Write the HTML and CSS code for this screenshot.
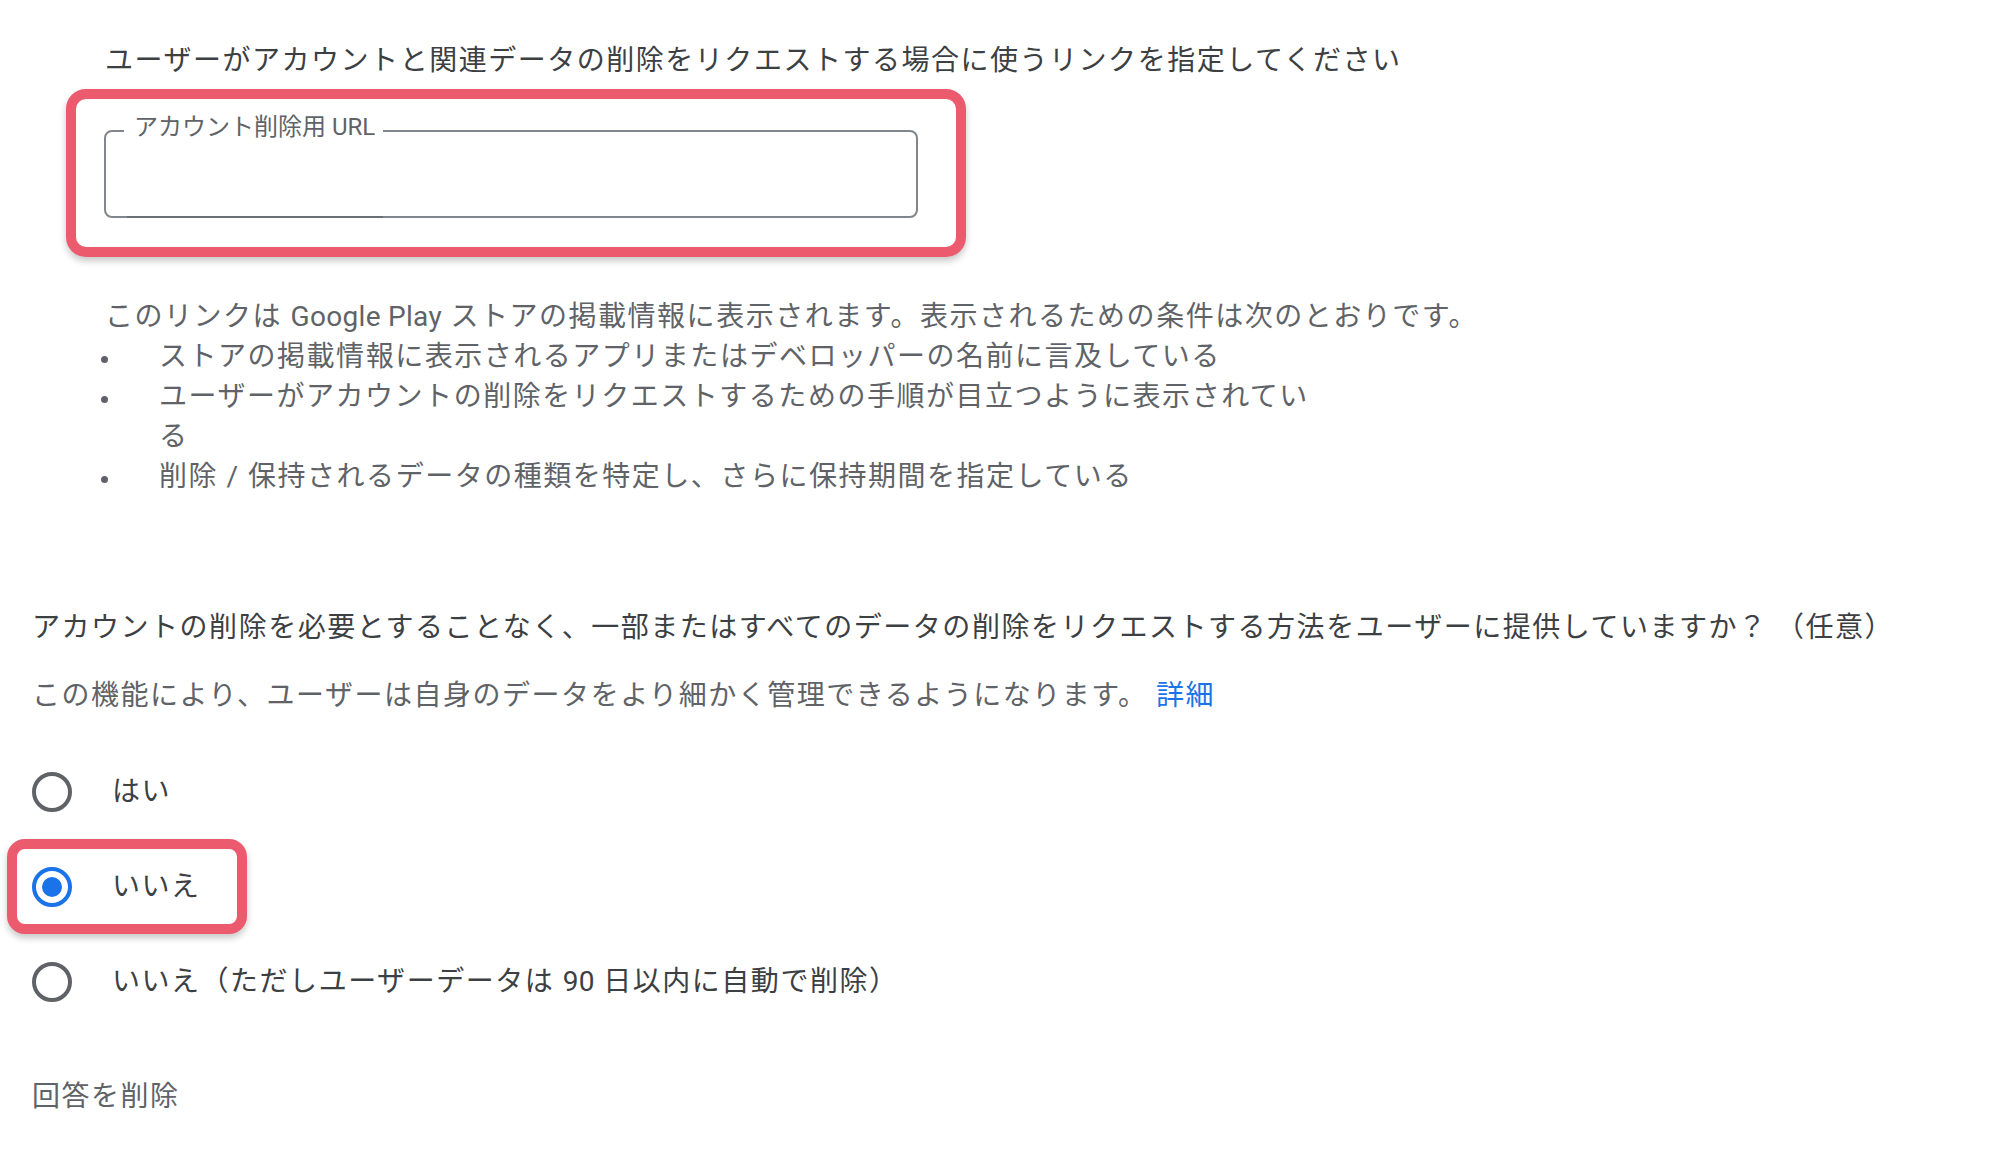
FILE: index.html
```html
<!DOCTYPE html>
<html lang="ja">
<head>
<meta charset="utf-8">
<title>アカウント削除</title>
<link rel="stylesheet" href="styles.css">
</head>
<body>
<main class="page">
  <section class="url-section">
    <p class="title">ユーザーがアカウントと関連データの削除をリクエストする場合に使うリンクを指定してください</p>
    <div class="highlight-box url-box">
      <div class="field">
        <fieldset class="outlined">
          <legend>アカウント削除用 URL</legend>
          <input class="field-input" type="text" aria-label="アカウント削除用 URL">
        </fieldset>
      </div>
    </div>
    <p class="note">このリンクは <span class="latin">Google Play</span> ストアの掲載情報に表示されます。表示されるための条件は次のとおりです。</p>
    <ul class="conditions">
      <li><span>ストアの掲載情報に表示されるアプリまたはデベロッパーの名前に言及している</span></li>
      <li><span>ユーザーがアカウントの削除をリクエストするための手順が目立つように表示されている</span></li>
      <li><span>削除 / 保持されるデータの種類を特定し、さらに保持期間を指定している</span></li>
    </ul>
  </section>

  <section class="data-section">
    <p class="question">アカウントの削除を必要とすることなく、一部またはすべてのデータの削除をリクエストする方法をユーザーに提供していますか？ （任意）</p>
    <p class="description">この機能により、ユーザーは自身のデータをより細かく管理できるようになります。 <a class="link" href="#">詳細</a></p>
    <div class="radio-group">
      <div class="radio-row">
        <span class="radio"></span>
        <span class="radio-label">はい</span>
      </div>
      <div class="radio-row highlight-box selected-row">
        <span class="radio checked"></span>
        <span class="radio-label">いいえ</span>
      </div>
      <div class="radio-row">
        <span class="radio"></span>
        <span class="radio-label">いいえ（ただしユーザーデータは <span class="latin">90</span> 日以内に自動で削除）</span>
      </div>
    </div>
    <p class="clear">回答を削除</p>
  </section>
</main>
</body>
</html>
```

FILE: styles.css
```css
* {
  box-sizing: border-box;
}

html, body {
  margin: 0;
  padding: 0;
  background: #ffffff;
}

body {
  font-family: Roboto, "Noto Sans CJK JP", sans-serif;
  font-size: 28px;
  line-height: 40px;
  letter-spacing: 1.52px;
  color: #3c4043;
  width: 2000px;
  height: 1155px;
  overflow: hidden;
}

p {
  margin: 0;
}

.latin {
  letter-spacing: 0.3px;
}

.page {
  display: flex;
  flex-direction: column;
}

/* ---------- section 1 ---------- */
.url-section {
  padding: 41px 0 0 105px;
  display: flex;
  flex-direction: column;
  align-items: flex-start;
}

.title {
  color: #3c4043;
}

.highlight-box {
  border: 10px solid #ec5a6e;
  border-radius: 20px;
  box-shadow: 0 4px 7px rgba(0, 0, 0, 0.22);
  background: #ffffff;
}

.url-box {
  margin: 8px 0 0 -39px;
  width: 900px;
  padding: 16px 38px 29px 28px;
}

.field {
  position: relative;
}

.outlined {
  margin: 0;
  height: 103px;
  border: 2px solid #80868b;
  border-radius: 8px;
  padding: 0 0 0 18px;
  min-width: 0;
}

.outlined legend {
  padding: 0 8px 8px 10px;
  font-size: 24px;
  line-height: 24px;
  letter-spacing: 0;
  color: #5f6368;
}

.field::after {
  content: "";
  position: absolute;
  left: 23px;
  bottom: 0;
  width: 256px;
  height: 2px;
  background: #6b7075;
}

.field-input {
  display: block;
  width: 100%;
  height: 60px;
  border: none;
  outline: none;
  background: transparent;
  font: inherit;
}

.note {
  margin-top: 40px;
  color: #5f6368;
}

.conditions {
  list-style: none;
  margin: 0;
  padding: 0;
  color: #5f6368;
}

.conditions li {
  display: flex;
  align-items: flex-start;
}

.conditions li::before {
  content: "";
  flex: none;
  width: 7px;
  height: 7px;
  border-radius: 50%;
  background: #5f6368;
  margin: 19px 51px 0 -4px;
}

.conditions li span {
  max-width: 1170px;
}

/* ---------- section 2 ---------- */
.data-section {
  padding: 111px 0 0 32px;
  display: flex;
  flex-direction: column;
  align-items: flex-start;
}

.question {
  color: #3c4043;
}

.description {
  margin-top: 28px;
  color: #5f6368;
}

.link {
  color: #1a73e8;
  text-decoration: none;
}

.radio-group {
  margin-top: 28px;
  display: flex;
  flex-direction: column;
}

.radio-row {
  display: flex;
  align-items: center;
  height: 95px;
  gap: 40px;
}

.selected-row {
  margin-left: -25px;
  width: 240px;
  padding-left: 15px;
  border-radius: 18px;
}

.radio {
  flex: none;
  width: 40px;
  height: 40px;
  border: 4px solid #5f6368;
  border-radius: 50%;
  display: flex;
  align-items: center;
  justify-content: center;
}

.radio.checked {
  border-color: #1a73e8;
}

.radio.checked::after {
  content: "";
  width: 20px;
  height: 20px;
  border-radius: 50%;
  background: #1a73e8;
}

.radio-label {
  color: #3c4043;
}

.clear {
  margin-top: 48px;
  color: #5f6368;
}
```
